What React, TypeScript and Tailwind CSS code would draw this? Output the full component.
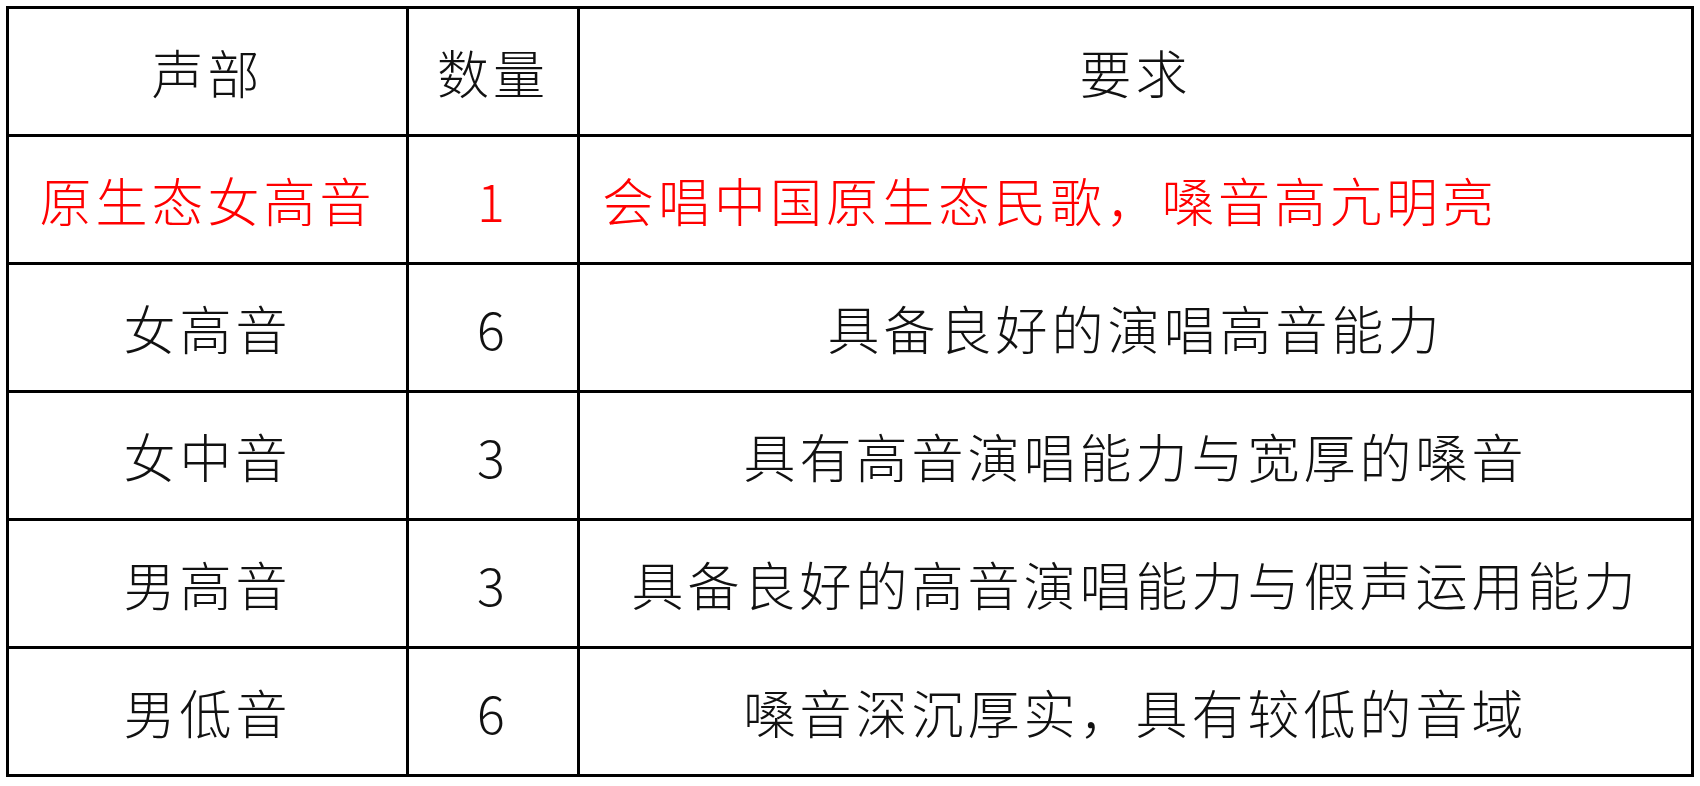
type Row = {
  part: string;
  count: string;
  note: string;
  highlight?: boolean;
};

const rows: Row[] = [
  {
    part: "原生态女高音",
    count: "1",
    note: "会唱中国原生态民歌，嗓音高亢明亮",
    highlight: true,
  },
  { part: "女高音", count: "6", note: "具备良好的演唱高音能力" },
  { part: "女中音", count: "3", note: "具有高音演唱能力与宽厚的嗓音" },
  { part: "男高音", count: "3", note: "具备良好的高音演唱能力与假声运用能力" },
  { part: "男低音", count: "6", note: "嗓音深沉厚实，具有较低的音域" },
];

const cell =
  "flex h-[125px] items-center justify-center bg-white leading-none tracking-[4px]";

export default function App() {
  return (
    <div
      className="min-h-[786px] w-[1700px] bg-white p-[6px] text-[52px] font-light text-[#111]"
      style={{ fontFamily: '"Noto Sans CJK SC", "Noto Sans", sans-serif' }}
    >
      <div className="grid w-[1688px] grid-cols-[397px_168px_1111px] gap-[3px] bg-black p-[3px]">
        {/* header */}
        <div className={cell}>声部</div>
        <div className={cell}>数量</div>
        <div className={cell}>要求</div>

        {rows.map((r) => (
          <Row key={r.part} row={r} />
        ))}
      </div>
    </div>
  );
}

function Row({ row }: { row: Row }) {
  const color = row.highlight ? "text-[#ff0000]" : "";
  return (
    <>
      <div className={`${cell} ${color}`}>{row.part}</div>
      <div className={`${cell} ${color}`}>{row.count}</div>
      {row.highlight ? (
        <div className={`${cell} ${color} justify-start pl-[22px]`}>
          {row.note}
        </div>
      ) : (
        <div className={cell}>{row.note}</div>
      )}
    </>
  );
}
